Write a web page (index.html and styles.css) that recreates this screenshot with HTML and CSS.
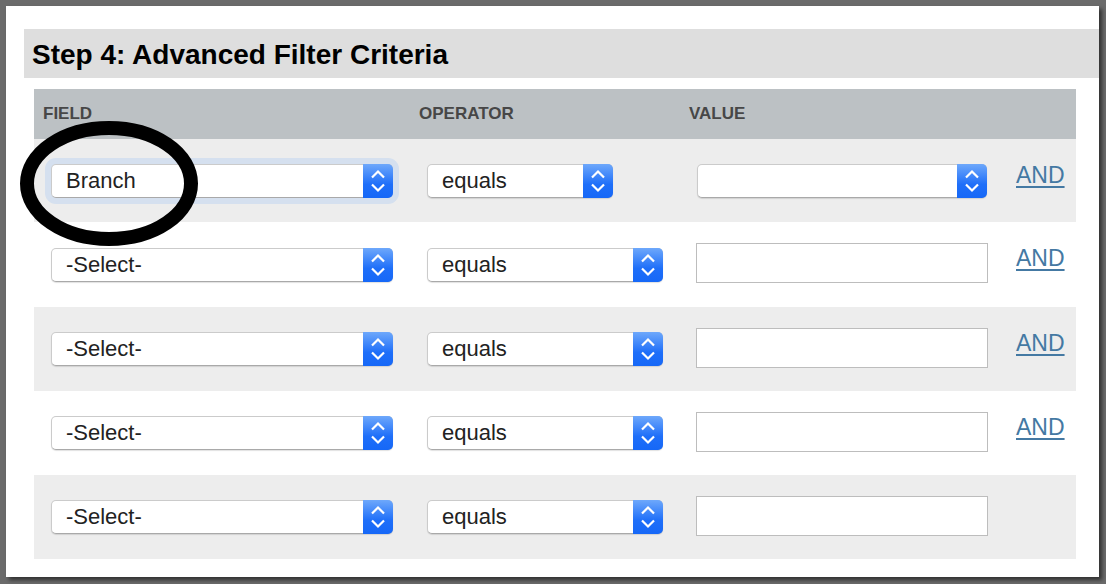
FILE: index.html
```html
<!DOCTYPE html>
<html lang="en">
	<head>
		<meta charset="utf-8">
		<title>Advanced Filter Criteria</title>
		<link rel="stylesheet" href="styles.css">
	</head>
	<body>
		<div class="panel">
			<h2 class="step-title">Step 4: Advanced Filter Criteria</h2>
			<div class="criteria">
				<div class="crit-row crit-head">
					<div class="cell">FIELD</div>
					<div class="cell">OPERATOR</div>
					<div class="cell">VALUE</div>
					<div class="cell"></div>
				</div>

				<div class="crit-row shaded first">
					<div class="cell"><div class="select field focused"><span class="select-text">Branch</span><span class="arrow"><svg viewBox="0 0 30 34"><polyline points="9,13.5 15,7.5 21,13.5"/><polyline points="9,20.5 15,26.5 21,20.5"/></svg></span></div></div>
					<div class="cell"><div class="select op short"><span class="select-text">equals</span><span class="arrow"><svg viewBox="0 0 30 34"><polyline points="9,13.5 15,7.5 21,13.5"/><polyline points="9,20.5 15,26.5 21,20.5"/></svg></span></div></div>
					<div class="cell"><div class="select value"><span class="select-text"></span><span class="arrow"><svg viewBox="0 0 30 34"><polyline points="9,13.5 15,7.5 21,13.5"/><polyline points="9,20.5 15,26.5 21,20.5"/></svg></span></div></div>
					<div class="cell link-cell"><a href="#" class="and-link">AND</a></div>
				</div>

				<div class="crit-row">
					<div class="cell"><div class="select field"><span class="select-text">-Select-</span><span class="arrow"><svg viewBox="0 0 30 34"><polyline points="9,13.5 15,7.5 21,13.5"/><polyline points="9,20.5 15,26.5 21,20.5"/></svg></span></div></div>
					<div class="cell"><div class="select op"><span class="select-text">equals</span><span class="arrow"><svg viewBox="0 0 30 34"><polyline points="9,13.5 15,7.5 21,13.5"/><polyline points="9,20.5 15,26.5 21,20.5"/></svg></span></div></div>
					<div class="cell"><input type="text" class="value-input"></div>
					<div class="cell link-cell"><a href="#" class="and-link">AND</a></div>
				</div>

				<div class="crit-row shaded">
					<div class="cell"><div class="select field"><span class="select-text">-Select-</span><span class="arrow"><svg viewBox="0 0 30 34"><polyline points="9,13.5 15,7.5 21,13.5"/><polyline points="9,20.5 15,26.5 21,20.5"/></svg></span></div></div>
					<div class="cell"><div class="select op"><span class="select-text">equals</span><span class="arrow"><svg viewBox="0 0 30 34"><polyline points="9,13.5 15,7.5 21,13.5"/><polyline points="9,20.5 15,26.5 21,20.5"/></svg></span></div></div>
					<div class="cell"><input type="text" class="value-input"></div>
					<div class="cell link-cell"><a href="#" class="and-link">AND</a></div>
				</div>

				<div class="crit-row">
					<div class="cell"><div class="select field"><span class="select-text">-Select-</span><span class="arrow"><svg viewBox="0 0 30 34"><polyline points="9,13.5 15,7.5 21,13.5"/><polyline points="9,20.5 15,26.5 21,20.5"/></svg></span></div></div>
					<div class="cell"><div class="select op"><span class="select-text">equals</span><span class="arrow"><svg viewBox="0 0 30 34"><polyline points="9,13.5 15,7.5 21,13.5"/><polyline points="9,20.5 15,26.5 21,20.5"/></svg></span></div></div>
					<div class="cell"><input type="text" class="value-input"></div>
					<div class="cell link-cell"><a href="#" class="and-link">AND</a></div>
				</div>

				<div class="crit-row shaded">
					<div class="cell"><div class="select field"><span class="select-text">-Select-</span><span class="arrow"><svg viewBox="0 0 30 34"><polyline points="9,13.5 15,7.5 21,13.5"/><polyline points="9,20.5 15,26.5 21,20.5"/></svg></span></div></div>
					<div class="cell"><div class="select op"><span class="select-text">equals</span><span class="arrow"><svg viewBox="0 0 30 34"><polyline points="9,13.5 15,7.5 21,13.5"/><polyline points="9,20.5 15,26.5 21,20.5"/></svg></span></div></div>
					<div class="cell"><input type="text" class="value-input"></div>
					<div class="cell link-cell"></div>
				</div>
			</div>

			<!-- hand-drawn highlight around the first field -->
			<svg class="annotation" viewBox="0 0 220 260" width="220" height="260">
				<ellipse cx="103" cy="177.5" rx="82" ry="55.5"/>
			</svg>
		</div>
	</body>
</html>
```

FILE: styles.css
```css
body {
	margin: 0;
	width: 1106px;
	height: 584px;
	overflow: hidden;
	background-color: #6b6b6b;
	font-family: 'Liberation Sans', Arial, sans-serif;
}

.panel {
	position: relative;
	box-sizing: border-box;
	width: 1093px;
	height: 571px;
	margin: 6px 0 0 6px;
	padding: 23px 0 0 18px;
	background-color: #fff;
	box-shadow: 3px 3px 4px rgba(0, 0, 0, 0.55);
}

.step-title {
	margin: 0;
	height: 49px;
	box-sizing: border-box;
	padding: 2px 0 0 8px;
	line-height: 47px;
	font-size: 28px;
	font-weight: bold;
	color: #000;
	background-color: #dedede;
}

/* Criteria table */

.criteria {
	margin: 11px 23px 0 10px;
}

.crit-row {
	display: grid;
	grid-template-columns: 376px 270px 327px 1fr;
	height: 84px;
	align-items: center;
}

.crit-row.first {
	height: 83px;
}

.crit-row.first + .crit-row {
	height: 85px;
}

.crit-row.shaded {
	background-color: #ededed;
}

.crit-head {
	height: 50px;
	background-color: #bcc1c4;
	font-size: 17px;
	font-weight: bold;
	color: #474747;
}

.crit-head .cell {
	padding-left: 9px;
}

.link-cell {
	align-self: start;
	padding: 23px 0 0 9px;
}

.and-link {
	font-size: 23px;
	line-height: 26px;
	color: #4479a3;
	text-decoration: underline;
	text-underline-offset: 3px;
}

/* Fake mac style select */

.select {
	display: flex;
	box-sizing: border-box;
	height: 34px;
	margin-left: 17px;
	background-color: #fff;
	border: 1px solid #cbcbcb;
	border-bottom-color: #a9a9a9;
	border-radius: 5px;
	box-shadow: 0 1px 1px rgba(0, 0, 0, 0.12);
}

.select.field { width: 342px; }
.select.op { width: 236px; }
.select.op.short { width: 186px; }
.select.value { width: 290px; }

.select.focused {
	box-shadow: 0 0 0 6px #d5e0ef;
}

.select-text {
	flex: 1;
	padding-left: 14px;
	font-size: 22px;
	line-height: 32px;
	color: #222;
}

.arrow {
	width: 30px;
	margin: -1px -1px -1px 0;
	border-radius: 0 5px 5px 0;
	background-image: linear-gradient(to bottom, #6ea8fb, #1f6ff9 60%, #1668f7);
}

.arrow svg {
	display: block;
	width: 30px;
	height: 34px;
	fill: none;
	stroke: #fff;
	stroke-width: 2.2;
}

.value-input {
	display: block;
	box-sizing: border-box;
	width: 292px;
	height: 40px;
	margin: -3px 0 0 16px;
	padding: 0 6px;
	border: 1px solid #bdbdbd;
	background-color: #fff;
}

.annotation {
	position: absolute;
	left: 0;
	top: 0;
	fill: none;
	stroke: #000;
	stroke-width: 14;
}
```
